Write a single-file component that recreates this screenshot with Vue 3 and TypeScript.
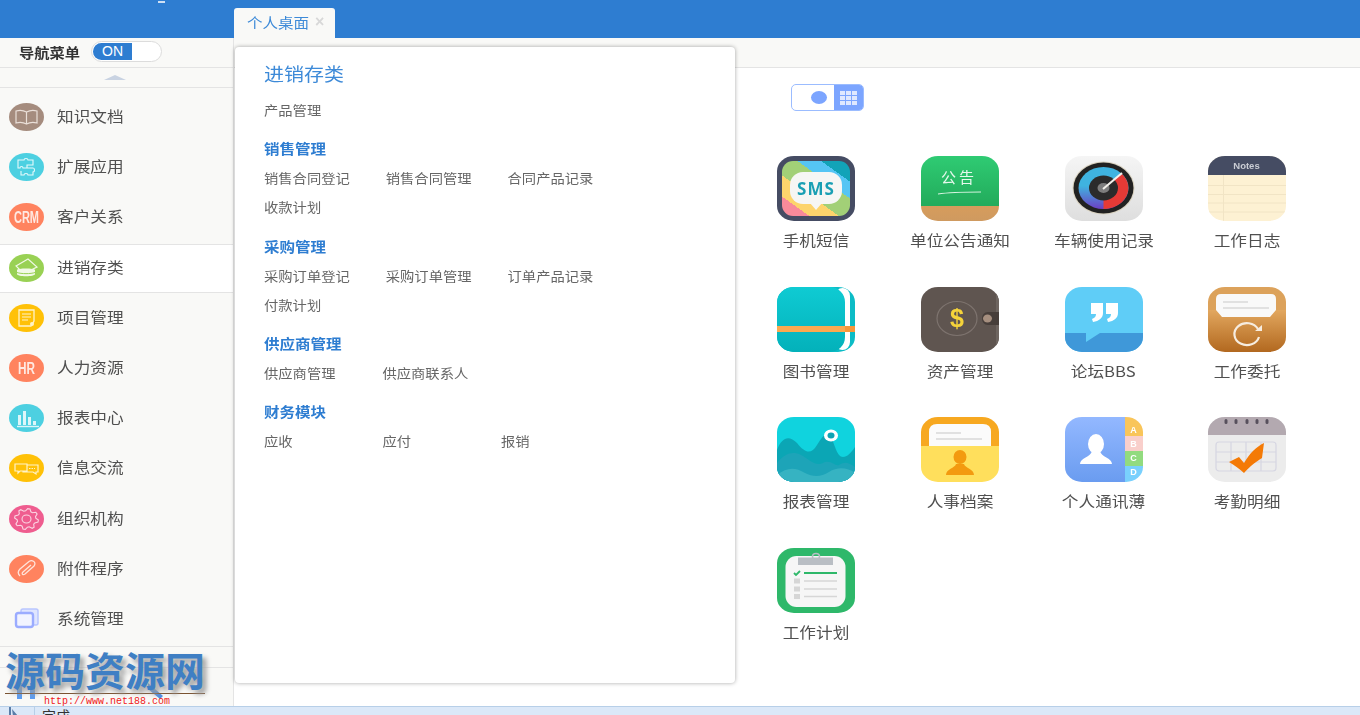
<script setup lang="ts">
interface NavItem {
  name: string
  icon: string
  active?: boolean
}

const navItems: NavItem[] = [
  { name: '知识文档', icon: 'book' },
  { name: '扩展应用', icon: 'puzzle' },
  { name: '客户关系', icon: 'crm' },
  { name: '进销存类', icon: 'hat', active: true },
  { name: '项目管理', icon: 'doc' },
  { name: '人力资源', icon: 'hr' },
  { name: '报表中心', icon: 'chart' },
  { name: '信息交流', icon: 'chat' },
  { name: '组织机构', icon: 'gear' },
  { name: '附件程序', icon: 'clip' },
  { name: '系统管理', icon: 'system' },
]

const apps = [
  { name: '手机短信', icon: 'sms' },
  { name: '单位公告通知', icon: 'notice' },
  { name: '车辆使用记录', icon: 'gauge' },
  { name: '工作日志', icon: 'notes' },
  { name: '图书管理', icon: 'books' },
  { name: '资产管理', icon: 'wallet' },
  { name: '论坛BBS', icon: 'forum' },
  { name: '工作委托', icon: 'folder' },
  { name: '报表管理', icon: 'report' },
  { name: '人事档案', icon: 'person' },
  { name: '个人通讯薄', icon: 'contacts' },
  { name: '考勤明细', icon: 'calendar' },
  { name: '工作计划', icon: 'plan' },
]

const menu = [
  { title: '', links: ['产品管理'] },
  { title: '销售管理', links: ['销售合同登记', '销售合同管理', '合同产品记录', '收款计划'] },
  { title: '采购管理', links: ['采购订单登记', '采购订单管理', '订单产品记录', '付款计划'] },
  { title: '供应商管理', links: ['供应商管理', '供应商联系人'] },
  { title: '财务模块', links: ['应收', '应付', '报销'] },
]

const contactTabs = [
  { label: 'A', color: '#f9c55a', y: 0, h: 19, base: 15.5 },
  { label: 'B', color: '#f9cfcb', y: 19, h: 15, base: 30 },
  { label: 'C', color: '#92db7f', y: 34, h: 15, base: 44 },
  { label: 'D', color: '#79d0fd', y: 49, h: 16, base: 57.5 },
]

// gear outline for the 组织机构 icon
const gearPoints = (() => {
  const pts: string[] = []
  for (let i = 0; i < 32; i++) {
    const tooth = i % 4 < 2
    const r = tooth ? 1 : 0.78
    const a = ((i + 0.5) / 32) * Math.PI * 2
    pts.push(`${(17.5 + Math.cos(a) * 12 * r).toFixed(1)},${(14 + Math.sin(a) * 10.5 * r).toFixed(1)}`)
  }
  return pts.join(' ')
})()
</script>

<template>
  <div class="page">
    <svg class="defs" width="0" height="0">
      <defs>
        <clipPath id="squircle"><rect width="78" height="65" rx="17" ry="15" /></clipPath>
        <linearGradient id="smsBands" gradientUnits="userSpaceOnUse" x1="14" y1="68" x2="64" y2="-2">
          <stop offset="0.2" stop-color="#f88a9a" />
          <stop offset="0.2" stop-color="#fdd46c" />
          <stop offset="0.4" stop-color="#fdd46c" />
          <stop offset="0.4" stop-color="#a2d077" />
          <stop offset="0.64" stop-color="#a2d077" />
          <stop offset="0.64" stop-color="#55c5f4" />
          <stop offset="0.8" stop-color="#55c5f4" />
          <stop offset="0.8" stop-color="#12a3b8" />
        </linearGradient>
        <linearGradient id="greenBoard" x1="0" y1="0" x2="0" y2="1">
          <stop offset="0" stop-color="#2fcb73" />
          <stop offset="1" stop-color="#22ab5b" />
        </linearGradient>
        <linearGradient id="woodBand" x1="0" y1="0" x2="0" y2="1">
          <stop offset="0" stop-color="#d69c5c" />
          <stop offset="1" stop-color="#cf9a60" />
        </linearGradient>
        <linearGradient id="greyTile" x1="0" y1="0" x2="0" y2="1">
          <stop offset="0" stop-color="#f5f5f5" />
          <stop offset="1" stop-color="#dedede" />
        </linearGradient>
        <linearGradient id="dial" x1="0" y1="0" x2="0" y2="1">
          <stop offset="0.45" stop-color="#3fb3e0" />
          <stop offset="1" stop-color="#6d3fc4" />
        </linearGradient>
        <linearGradient id="tealBook" x1="0" y1="0" x2="0" y2="1">
          <stop offset="0" stop-color="#0fcbd3" />
          <stop offset="1" stop-color="#03b1ba" />
        </linearGradient>
        <linearGradient id="brownBody" x1="0" y1="0" x2="0" y2="1">
          <stop offset="0" stop-color="#e2a75f" />
          <stop offset="1" stop-color="#b2681f" />
        </linearGradient>
        <linearGradient id="contactBlue" x1="0" y1="0" x2="0" y2="1">
          <stop offset="0" stop-color="#93b8ff" />
          <stop offset="1" stop-color="#6a9cf0" />
        </linearGradient>
      </defs>
    </svg>

    <header class="top-bar">
      <span class="top-mark"></span>
      <div class="tab">
        <span class="tab-name">个人桌面</span>
        <span class="tab-close">×</span>
      </div>
    </header>

    <div class="body">
      <aside class="sidebar">
        <div class="nav-head">
          <span class="nav-title">导航菜单</span>
          <div class="switch"><span class="switch-on">ON</span></div>
        </div>
        <div class="scroll-up"><span class="arrow"></span></div>
        <ul class="nav-list">
          <li v-for="item in navItems" :key="item.name" class="nav-item" :class="{ active: item.active }">
            <svg class="nav-icon" viewBox="0 0 35 28" width="35" height="28">
              <template v-if="item.icon === 'book'">
                <ellipse cx="17.5" cy="14" rx="17.5" ry="14" fill="#a58c7e" />
                <path d="M17.5 9C14 7 10 7 7 8V20C10 19 14 19 17.5 21C21 19 25 19 28 20V8C25 7 21 7 17.5 9ZM17.5 9V21" fill="none" stroke="#eadfd8" stroke-width="1.2" />
              </template>
              <template v-else-if="item.icon === 'puzzle'">
                <ellipse cx="17.5" cy="14" rx="17.5" ry="14" fill="#4dd0e1" />
                <path d="M9 7H15C15 5 19 5 19 7H24V12H18V15H14C14 13 11 13 11 15H9ZM18 15H24C26 15 26 19 24 19V22H19C19 20 15 20 15 22H12V18" fill="none" stroke="#e6f9fb" stroke-width="1.1" />
              </template>
              <template v-else-if="item.icon === 'crm'">
                <ellipse cx="17.5" cy="14" rx="17.5" ry="14" fill="#ff835f" />
                <text x="5" y="20" textLength="25" lengthAdjust="spacingAndGlyphs" class="badge-text">CRM</text>
              </template>
              <template v-else-if="item.icon === 'hr'">
                <ellipse cx="17.5" cy="14" rx="17.5" ry="14" fill="#ff835f" />
                <text x="9" y="20" textLength="17" lengthAdjust="spacingAndGlyphs" class="badge-text">HR</text>
              </template>
              <template v-else-if="item.icon === 'hat'">
                <ellipse cx="17.5" cy="14" rx="17.5" ry="14" fill="#99d154" />
                <path d="M7 12L19 5L28 13L22 16H11Z" fill="none" stroke="#f1f9e6" stroke-width="1.2" />
                <path d="M8 16C8 14 26 14 26 16V20C26 23 8 23 8 20Z" fill="#f1f9e6" />
                <path d="M8 18.5C12 20 22 20 26 18.5" fill="none" stroke="#99d154" />
              </template>
              <template v-else-if="item.icon === 'doc'">
                <ellipse cx="17.5" cy="14" rx="17.5" ry="14" fill="#ffc107" />
                <path d="M10 6H25V17L22 22H10Z" fill="none" stroke="#fff3c9" stroke-width="1.3" />
                <path d="M13 10H22M13 13H22M13 16H19" stroke="#fff3c9" stroke-width="1" />
                <circle cx="23" cy="20" r="2" fill="#fff3c9" />
              </template>
              <template v-else-if="item.icon === 'chart'">
                <ellipse cx="17.5" cy="14" rx="17.5" ry="14" fill="#4dd0e1" />
                <path d="M9 11H12V21H9ZM14 7H17V21H14ZM19 13H22V21H19ZM24 17H27V21H24Z" fill="#dcf6f9" />
                <path d="M8 22.5H30" stroke="#dcf6f9" stroke-width="1.4" />
              </template>
              <template v-else-if="item.icon === 'chat'">
                <ellipse cx="17.5" cy="14" rx="17.5" ry="14" fill="#ffc107" />
                <path d="M6 10H18V17H11L9 19V17H6ZM18 11H29V18H27V20L24 18H14V17" fill="none" stroke="#fff3c9" stroke-width="1.2" />
                <path d="M20 14.5H26" stroke="#fff3c9" stroke-width="1.2" stroke-dasharray="1.5 1" />
              </template>
              <template v-else-if="item.icon === 'gear'">
                <ellipse cx="17.5" cy="14" rx="17.5" ry="14" fill="#ef5d8f" />
                <polygon :points="gearPoints" fill="none" stroke="#fbd5e2" stroke-width="1.1" />
                <ellipse cx="17.5" cy="14" rx="4.5" ry="4" fill="none" stroke="#fbd5e2" stroke-width="1.1" />
              </template>
              <template v-else-if="item.icon === 'clip'">
                <ellipse cx="17.5" cy="14" rx="17.5" ry="14" fill="#ff835f" />
                <path d="M11 21C8 18 9 16 11 14L20 6.5C23 4.5 28 7 25 11L16 19C14 20.5 12 19 14 17L22 10" fill="none" stroke="#ffe3da" stroke-width="1.3" />
              </template>
              <template v-else>
                <rect x="12" y="4" width="17" height="16" rx="2" fill="#dfe5ff" stroke="#b9c6ff" stroke-width="1.5" />
                <rect x="7" y="8" width="17" height="14" rx="2.5" fill="#f2f4ff" stroke="#9bacff" stroke-width="2.4" />
              </template>
            </svg>
            <span class="nav-name">{{ item.name }}</span>
          </li>
        </ul>
        <div class="nav-foot"></div>
        <div class="nav-bottom">
          <svg class="bottom-icon" viewBox="0 0 150 16" width="150" height="16">
            <path d="M0 0H5V16H0ZM13 0H18V16H13Z" fill="#5b9cf2" />
            <path d="M131 0L146 13L143 16L131 6Z" fill="#4d8fe6" />
          </svg>
        </div>
      </aside>

      <main class="main">
        <div class="main-bar"></div>
        <div class="view-switch">
          <span class="view-list"><i></i></span>
          <span class="view-grid">
            <i v-for="n in 9" :key="n"></i>
          </span>
        </div>
        <div class="app-grid">
          <div v-for="app in apps" :key="app.name" class="app">
            <svg class="app-icon" viewBox="0 0 78 65" width="78" height="65">
              <g clip-path="url(#squircle)">
                <template v-if="app.icon === 'sms'">
                  <rect width="78" height="65" fill="#454c63" />
                  <rect x="5" y="5" width="68" height="55" rx="11" fill="url(#smsBands)" />
                  <rect x="13" y="16" width="52" height="32" rx="13" fill="#f6f6f4" />
                  <path d="M33 47H45L39 54Z" fill="#f6f6f4" />
                  <text x="39" y="38.5" text-anchor="middle" class="sms-text">SMS</text>
                </template>
                <template v-else-if="app.icon === 'notice'">
                  <rect width="78" height="50" fill="url(#greenBoard)" />
                  <rect y="50" width="78" height="15" fill="url(#woodBand)" />
                  <text x="38" y="27" text-anchor="middle" class="board-text">公告</text>
                  <path d="M17 38C30 36 46 36 60 36" fill="none" stroke="#d7f3e0" stroke-width="1.1" />
                </template>
                <template v-else-if="app.icon === 'gauge'">
                  <rect width="78" height="65" fill="url(#greyTile)" />
                  <ellipse cx="38.5" cy="32" rx="31" ry="26.5" fill="#d9d2c0" />
                  <ellipse cx="38.5" cy="32" rx="30" ry="25.5" fill="#222" />
                  <ellipse cx="38.5" cy="32" rx="25" ry="21" fill="url(#dial)" />
                  <path d="M38.5 32L57 18A25 21 0 0 1 38.5 53Z" fill="#e63a36" />
                  <ellipse cx="38.5" cy="32" rx="14.5" ry="12.5" fill="#2b2b2b" />
                  <ellipse cx="38.5" cy="32" rx="6" ry="5" fill="#7d7d7d" />
                  <path d="M38 33L57 17" stroke="#f3f0ea" stroke-width="2" />
                </template>
                <template v-else-if="app.icon === 'notes'">
                  <rect width="78" height="65" fill="#fdf1d3" />
                  <path d="M0 29.5H78M0 38.5H78M0 47H78M0 56H78M15.5 19V65" stroke="#f1e4c5" stroke-width="1" />
                  <rect width="78" height="19" fill="#454c63" />
                  <text x="38.5" y="12.5" text-anchor="middle" class="notes-text">Notes</text>
                </template>
                <template v-else-if="app.icon === 'books'">
                  <rect width="78" height="65" fill="#0cbcc6" />
                  <rect x="58" y="1" width="15" height="62" rx="8" fill="#fff" />
                  <rect width="68" height="65" rx="15" fill="url(#tealBook)" />
                  <rect y="39" width="68" height="6" fill="#fba94f" />
                  <rect x="68" y="39" width="10" height="6" fill="#f8973a" />
                </template>
                <template v-else-if="app.icon === 'wallet'">
                  <rect width="78" height="65" fill="#5f5550" />
                  <rect x="75" width="3" height="65" fill="#6e6560" />
                  <ellipse cx="36" cy="31.5" rx="20" ry="17" fill="none" stroke="#7d736e" stroke-width="1.2" />
                  <text x="36" y="40" text-anchor="middle" class="dollar-text">$</text>
                  <path d="M78 25H67C59 25 59 38 67 38H78Z" fill="#473e3a" />
                  <ellipse cx="66.5" cy="31.5" rx="4.5" ry="4" fill="#a68f7f" />
                </template>
                <template v-else-if="app.icon === 'forum'">
                  <rect width="78" height="65" fill="#5fcdf7" />
                  <rect y="46" width="78" height="19" fill="#3f98d9" />
                  <path d="M21 46H35L21 55Z" fill="#5fcdf7" />
                  <path d="M26 16H38V26C38 31 34 34 28 35L27 32C30 31 31 29 31 27H26ZM41 16H53V26C53 31 49 34 43 35L42 32C45 31 46 29 46 27H41Z" fill="#fff" />
                </template>
                <template v-else-if="app.icon === 'folder'">
                  <rect width="78" height="30" fill="#dca25b" />
                  <path d="M8 12Q8 7 13 7H63Q68 7 68 12V23H78V65H0V23H8Z" fill="#f9f9f9" />
                  <path d="M0 23H8L14 30H62L68 23H78V65H0Z" fill="url(#brownBody)" />
                  <path d="M15 15H40M15 21H61" stroke="#d9d9d9" stroke-width="1.6" />
                  <path d="M50 42A12.5 11 0 1 0 51 50" fill="none" stroke="#f6ecdf" stroke-width="2.2" />
                  <path d="M47 44H54V38Z" fill="#f6ecdf" />
                </template>
                <template v-else-if="app.icon === 'report'">
                  <rect width="78" height="65" fill="#10d3de" />
                  <path d="M0 33C5 20 12 18 20 26C28 36 34 38 40 28C46 18 50 14 54 20C58 28 60 40 66 40C70 40 74 36 78 30V65H0Z" fill="#0ba6b5" />
                  <path d="M0 46C8 36 16 34 24 38C32 42 38 50 46 46C54 42 58 50 62 48C68 44 72 46 78 50V65H0Z" fill="#1da4b8" />
                  <path d="M0 58C10 50 18 50 28 56C36 60 44 60 52 55C60 50 70 50 78 56V65H0Z" fill="#36b3c2" />
                  <ellipse cx="54" cy="18.5" rx="7" ry="6" fill="#fff" />
                  <ellipse cx="54" cy="18.5" rx="3.5" ry="3" fill="#0fa3b3" />
                </template>
                <template v-else-if="app.icon === 'person'">
                  <rect width="78" height="30" fill="#f7a820" />
                  <path d="M8 29V15Q8 7 16 7H62Q70 7 70 15V29Z" fill="#fbfbfb" />
                  <path d="M15 16H40M15 22H61" stroke="#d9d9d9" stroke-width="1.6" />
                  <rect y="29" width="78" height="36" fill="#ffdf5c" />
                  <ellipse cx="39" cy="40" rx="6.5" ry="7" fill="#f39a10" />
                  <path d="M25 58C25 52 34 51 35 47H43C44 51 53 52 53 58Z" fill="#f39a10" />
                </template>
                <template v-else-if="app.icon === 'contacts'">
                  <rect width="60" height="65" fill="url(#contactBlue)" />
                  <rect v-for="t in contactTabs" :key="t.color" x="60" :y="t.y" width="18" :height="t.h" :fill="t.color" />
                  <text v-for="t in contactTabs" :key="t.label" x="68.5" :y="t.base" text-anchor="middle" class="tab-letter">{{ t.label }}</text>
                  <ellipse cx="31" cy="27" rx="8" ry="10" fill="#fff" />
                  <path d="M15 47C15 41 26 40 27 34H35C36 40 47 41 47 47Z" fill="#fff" />
                </template>
                <template v-else-if="app.icon === 'calendar'">
                  <rect width="78" height="65" fill="#ececec" />
                  <rect width="78" height="18" fill="#b3a9b0" />
                  <path d="M18 3.5V5.5M28 3.5V5.5M39 3.5V5.5M49 3.5V5.5M59 3.5V5.5" stroke="#57505c" stroke-width="3" stroke-linecap="round" />
                  <rect x="8" y="25" width="60" height="29" rx="3" fill="none" stroke="#d6d6e2" stroke-width="1.2" />
                  <path d="M23 25V54M38 25V54M53 25V54M8 35H68M8 45H68" stroke="#d6d6e2" stroke-width="1.2" />
                  <path d="M21 45L31 40L36 46C42 36 48 30 56 26L54 41C49 44 42 49 36 56C32 52 27 49 21 45Z" fill="#f47a06" />
                </template>
                <template v-else>
                  <rect width="78" height="65" fill="#2eb86a" />
                  <rect x="8.5" y="8" width="60" height="51" rx="11" fill="#f6f6f6" />
                  <ellipse cx="39" cy="8.5" rx="3.5" ry="3" fill="none" stroke="#b9bec4" stroke-width="1.6" />
                  <rect x="21" y="9.5" width="35" height="7.5" fill="#b9bec4" />
                  <path d="M17 25L19 27L23 23" fill="none" stroke="#2eb86a" stroke-width="1.8" />
                  <path d="M27 25H60" stroke="#2eb86a" stroke-width="1.8" />
                  <path d="M27 33H60M27 41H60M27 48.5H60" stroke="#d6d6d6" stroke-width="1.5" />
                  <rect x="17" y="30.5" width="6" height="5" fill="#d6d6d6" />
                  <rect x="17" y="38.5" width="6" height="5" fill="#d6d6d6" />
                  <rect x="17" y="46" width="6" height="5" fill="#d6d6d6" />
                </template>
              </g>
            </svg>
            <span class="app-name">{{ app.name }}</span>
          </div>
        </div>
      </main>
    </div>

    <footer class="status">
      <svg class="status-icon" viewBox="0 0 12 9" width="12" height="9">
        <path d="M1 0H3V9H1ZM4 2L10 9H5Z" fill="#5a7da8" />
      </svg>
      <span class="status-text">完成</span>
    </footer>

    <!-- flyout menu over the desktop -->
    <section class="flyout">
      <h2 class="flyout-title">进销存类</h2>
      <div v-for="group in menu" :key="group.title" class="group">
        <h3 v-if="group.title" class="group-title">{{ group.title }}</h3>
        <div class="links">
          <a v-for="link in group.links" :key="link" class="link">{{ link }}</a>
        </div>
      </div>
    </section>

    <!-- site watermark burnt over the corner -->
    <div class="watermark">
      <div class="wm-title">源码资源网</div>
      <div class="wm-url">http://www.net188.com</div>
    </div>
  </div>
</template>

<style>
html, body {
  margin: 0;
  overflow: hidden;
}
</style>

<style scoped>
.page {
  position: relative;
  display: flex;
  flex-direction: column;
  width: 1360px;
  height: 715px;
  overflow: hidden;
  background: #fff;
  font-family: "Noto Sans CJK SC", "Liberation Sans", sans-serif;
}

.defs {
  position: absolute;
}

.top-bar {
  position: relative;
  display: flex;
  align-items: flex-end;
  flex: none;
  height: 38px;
  padding-left: 234px;
  box-sizing: border-box;
  background: #2e7dd1;
}

.top-mark {
  position: absolute;
  left: 158px;
  top: 1px;
  width: 7px;
  height: 2px;
  background: #cfe0f4;
}

.tab {
  display: flex;
  align-items: center;
  width: 101px;
  height: 30px;
  padding: 0 0 2px 13px;
  box-sizing: border-box;
  background: #f9f9f7;
  border-radius: 3px 3px 0 0;
  filter: blur(0.3px);
}

/* the reference is stretched sideways, so text is widened rather than tracked out */
.tab-name {
  display: inline-block;
  transform: scaleX(1.107);
  transform-origin: left center;
  font-size: 14px;
  color: #3d8ad8;
}

.tab-close {
  margin-left: 12px;
  font-size: 16px;
  font-family: "Liberation Sans", sans-serif;
  font-weight: bold;
  color: #d8d8d8;
}

.body {
  display: flex;
  flex: 1;
  min-height: 0;
}

.sidebar {
  display: flex;
  flex-direction: column;
  flex: none;
  width: 234px;
  box-sizing: border-box;
  background: #f9f9f7;
  border-right: 1px solid #e4e4e4;
}

.nav-head {
  display: flex;
  align-items: center;
  flex: none;
  height: 30px;
  padding: 0 0 2px 19px;
  box-sizing: border-box;
  border-bottom: 1px solid #e4e4e4;
}

.nav-title {
  display: inline-block;
  width: 54px;
  transform: scaleX(1.13);
  transform-origin: left center;
  font-size: 13.5px;
  font-weight: bold;
  white-space: nowrap;
  color: #333;
  filter: blur(0.3px);
}

.switch {
  width: 71px;
  height: 21px;
  margin-left: 18px;
  padding: 1px;
  box-sizing: border-box;
  background: #fff;
  border: 1px solid #dcdcdc;
  border-radius: 11px;
  overflow: hidden;
}

.switch-on {
  display: block;
  width: 39px;
  height: 17px;
  background: #2e7dd1;
  border-radius: 9px 0 0 9px;
  font-family: "Liberation Sans", sans-serif;
  font-size: 14px;
  line-height: 17px;
  text-align: center;
  color: #fff;
}

.scroll-up {
  display: flex;
  justify-content: center;
  flex: none;
  height: 20px;
  box-sizing: border-box;
  padding: 7px 4px 0 0;
  border-bottom: 1px solid #e4e4e4;
}

.arrow {
  width: 0;
  height: 0;
  border-left: 11px solid transparent;
  border-right: 11px solid transparent;
  border-bottom: 5px solid #c9d3e2;
}

.nav-list {
  display: flex;
  flex-direction: column;
  gap: 1.2px;
  flex: none;
  height: 558px;
  margin: 0;
  padding: 5.9px 0 0;
  box-sizing: border-box;
  list-style: none;
}

.nav-item {
  display: flex;
  align-items: center;
  flex: none;
  height: 49px;
  padding: 0 0 2.6px 9px;
  box-sizing: border-box;
}

.nav-item.active {
  background: #fff;
  box-shadow: inset 0 1px 0 #e4e4e4, inset 0 -1px 0 #e4e4e4;
}

.nav-icon {
  flex: none;
  filter: blur(0.4px);
}

.badge-text {
  font-family: "Liberation Sans", sans-serif;
  font-size: 16px;
  font-weight: bold;
  fill: #ffe9e2;
}

.nav-name {
  display: inline-block;
  margin: -3px 0 0 13px;
  transform: scaleX(1.11);
  transform-origin: left center;
  font-size: 15px;
  color: #505050;
  filter: blur(0.3px);
}

.nav-foot {
  flex: none;
  height: 20px;
  border-top: 1px solid #e4e4e4;
  border-bottom: 1px solid #e4e4e4;
}

.nav-bottom {
  flex: 1;
  padding: 15px 0 0 17px;
  overflow: hidden;
}

.bottom-icon {
  display: block;
}

.main {
  flex: 1;
  min-width: 0;
}

.main-bar {
  height: 30px;
  box-sizing: border-box;
  background: #f9f9f7;
  border-bottom: 1px solid #e4e4e4;
}

.view-switch {
  display: flex;
  width: 73px;
  height: 27px;
  margin: 16px 0 0 557px;
  box-sizing: border-box;
  border: 1px solid #9bbcff;
  border-radius: 5px;
  overflow: hidden;
  filter: blur(0.3px);
}

.view-list {
  display: flex;
  align-items: center;
  justify-content: flex-end;
  width: 42px;
  padding-right: 7px;
  box-sizing: border-box;
}

.view-list i {
  width: 16px;
  height: 13px;
  background: #7ca5ff;
  border-radius: 50%;
}

.view-grid {
  display: grid;
  grid-template-columns: repeat(3, 5px);
  grid-auto-rows: 4px;
  gap: 1px;
  align-content: center;
  justify-content: center;
  flex: 1;
  background: #7ca5ff;
}

.view-grid i {
  background: #dfe8ff;
}

.app-grid {
  display: grid;
  grid-template-columns: repeat(4, 143.67px);
  grid-auto-rows: 130.5px;
  margin: 45px 0 0 510.5px;
}

.app {
  display: flex;
  flex-direction: column;
  align-items: center;
}

.app-icon {
  display: block;
  flex: none;
  filter: blur(0.4px);
}

.app-name {
  margin-top: 10px;
  transform: scaleX(1.11);
  font-size: 15px;
  line-height: 18px;
  color: #505050;
  white-space: nowrap;
  filter: blur(0.3px);
}

.sms-text {
  font-family: "Open Sans", "Liberation Sans", sans-serif;
  font-size: 17px;
  font-weight: bold;
  letter-spacing: 1px;
  fill: #1a9fb4;
}

.board-text {
  font-family: "Noto Sans CJK SC", sans-serif;
  font-size: 15px;
  letter-spacing: 3px;
  fill: #e6f8ec;
}

.notes-text {
  font-family: "Liberation Sans", sans-serif;
  font-size: 9.5px;
  font-weight: bold;
  fill: #c9ccd4;
}

.dollar-text {
  font-family: "Liberation Sans", sans-serif;
  font-size: 25px;
  font-weight: bold;
  fill: #f5d33a;
}

.tab-letter {
  font-family: "Liberation Sans", sans-serif;
  font-size: 9px;
  font-weight: bold;
  fill: #fff;
}

.status {
  display: flex;
  flex: none;
  height: 9px;
  box-sizing: border-box;
  background: #dbe8f8;
  border-top: 1px solid #b7cfe8;
  overflow: hidden;
}

.status-icon {
  flex: none;
  margin-left: 8px;
  padding-right: 14px;
  border-right: 1px solid #b7cfe8;
}

.status-text {
  margin: -1px 0 0 7px;
  font-size: 14px;
  line-height: 18px;
  color: #333;
}

.flyout {
  position: absolute;
  left: 235px;
  top: 47px;
  width: 500px;
  height: 636px;
  padding: 15px 0 0 29px;
  box-sizing: border-box;
  background: #fff;
  border-radius: 4px;
  box-shadow: 0 0 4px rgba(0, 0, 0, 0.35);
}

.flyout-title {
  margin: 0 0 11px;
  transform: scaleX(1.11);
  transform-origin: left center;
  font-size: 18px;
  line-height: 22px;
  font-weight: normal;
  color: #3d8ad8;
  filter: blur(0.3px);
}

.group {
  margin-bottom: 14.3px;
}

.group-title {
  margin: 0 0 5px;
  transform: scaleX(1.107);
  transform-origin: left center;
  font-size: 14px;
  line-height: 20px;
  font-weight: bold;
  color: #2e7dd1;
  filter: blur(0.3px);
}

.links {
  display: flex;
  flex-wrap: wrap;
  max-width: 364px;
  transform: scaleX(1.1);
  transform-origin: left center;
  filter: blur(0.3px);
}

.link {
  min-width: 75px;
  margin-right: 32.7px;
  font-size: 13px;
  line-height: 29px;
  color: #666;
}

.watermark {
  position: absolute;
  left: 5px;
  top: 646px;
  width: 200px;
  pointer-events: none;
}

.wm-title {
  height: 48px;
  box-sizing: border-box;
  border-bottom: 1px solid #7a5230;
  font-size: 40px;
  line-height: 46px;
  font-weight: bold;
  white-space: nowrap;
  color: #3f7fc4;
  text-shadow: 4px 4px 5px #9a9a9a;
}

.wm-url {
  margin: 1px 0 0 39px;
  font-family: "Liberation Mono", monospace;
  font-size: 10px;
  line-height: 14px;
  color: #f02020;
}
</style>
